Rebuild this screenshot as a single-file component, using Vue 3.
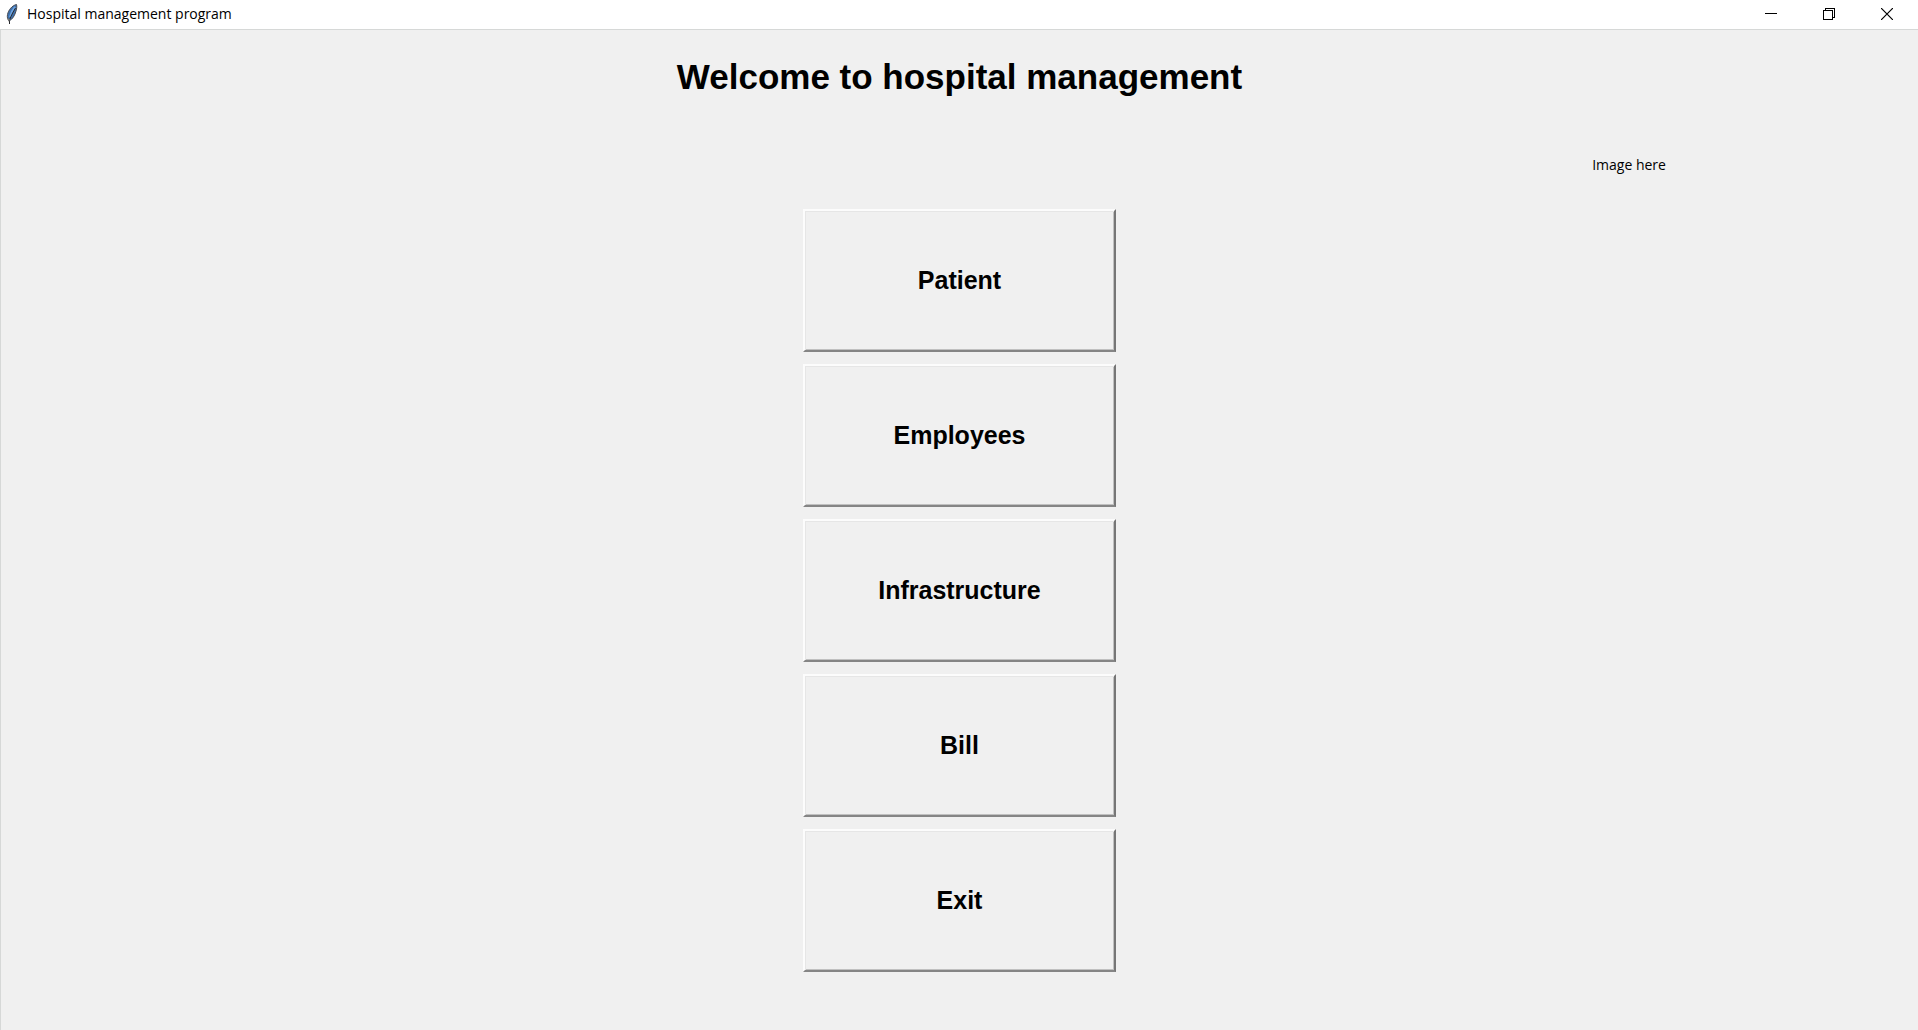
<script setup>
const entries = ['Patient', 'Employees', 'Infrastructure', 'Bill', 'Exit']
</script>

<template>
  <div class="window">
    <header class="titlebar">
      <svg class="feather" width="16" height="22" viewBox="0 0 16 22" aria-hidden="true">
        <path d="M12.5 1.5C8 2.500 4.500 7 3.500 11.500C3 14 3.500 16 5 18C8.500 16.500 11 12 12 8C12.800 5 13 3.500 12.500 1.500Z" fill="#3d70ad" stroke="#4a4d54" stroke-width="1" />
        <path d="M11 4C8.500 7 7 10 6 14" fill="none" stroke="#6fa5e2" stroke-width="2" />
        <path d="M11.500 5C9 9 7 13 5.500 17V21" fill="none" stroke="#26282c" stroke-width="1" />
        <path d="M3 15L6 16L5 19Z" fill="#777" />
      </svg>
      <span class="caption">Hospital management program</span>
      <button class="control" type="button" aria-label="Minimize">
        <svg width="12" height="12" viewBox="0 0 12 12" shape-rendering="crispEdges"><path d="M0 5.5H12" stroke="#000" /></svg>
      </button>
      <button class="control" type="button" aria-label="Restore">
        <svg width="12" height="12" viewBox="0 0 12 12" fill="none" stroke="#000" shape-rendering="crispEdges"><path d="M.5 2.5H9.5V11.5H.5ZM2.5 2.5V.5H11.5V9.5H9.5" /></svg>
      </button>
      <button class="control" type="button" aria-label="Close">
        <svg width="12" height="12" viewBox="0 0 12 12"><path d="M0 0L12 12M12 0L0 12" stroke="#000" stroke-width="1.2" /></svg>
      </button>
    </header>
    <main class="content">
      <h1>Welcome to hospital management</h1>
      <p class="placeholder">Image here</p>
      <nav class="menu">
        <button v-for="entry in entries" :key="entry" class="entry" type="button">{{ entry }}</button>
      </nav>
    </main>
  </div>
</template>

<style>
body {
  background: #f0f0f0;
}
</style>

<style scoped>
.window {
  display: flex;
  flex-direction: column;
  min-height: 100vh;
  color: #000;
  font-family: "Open Sans", "Noto Sans", sans-serif;
}
.titlebar {
  box-sizing: border-box;
  display: flex;
  align-items: center;
  height: 29px;
  padding: 0 2px 1px 4px;
  background: #fff;
}
.feather {
  margin-right: 7px;
}
.caption {
  flex: 1;
  font-size: 14px;
  line-height: 20px;
}
.control {
  display: flex;
  align-items: center;
  justify-content: center;
  width: 58px;
  height: 28px;
  padding: 0;
  border: 0;
  background: none;
}
.content {
  flex: 1;
  display: flex;
  flex-direction: column;
  border-top: 1px solid #d6d8d7;
  border-left: 1px solid #d6d8d7;
  background: #f0f0f0;
}
h1 {
  margin: 27px 0 0;
  font: bold 35px/40px "Liberation Sans", Arial, sans-serif;
  text-align: center;
}
.placeholder {
  align-self: flex-end;
  width: 17%;
  margin: 58px 0 0;
  font-size: 14px;
  line-height: 20px;
}
.menu {
  display: flex;
  flex-direction: column;
  align-items: center;
  gap: 12px;
  margin: 34px 0 54px;
}
.entry {
  width: 313px;
  height: 143px;
  padding: 0 0 2px;
  border: 2px solid;
  border-color: #fcfcfc #767676 #858585 #fcfcfc;
  background: #f0f0f0;
  box-shadow: inset 1px 1px #e6e6e6, inset -1px -1px #c0c0c0;
  color: #000;
  font: bold 25px/30px "Liberation Sans", Arial, sans-serif;
}
</style>
